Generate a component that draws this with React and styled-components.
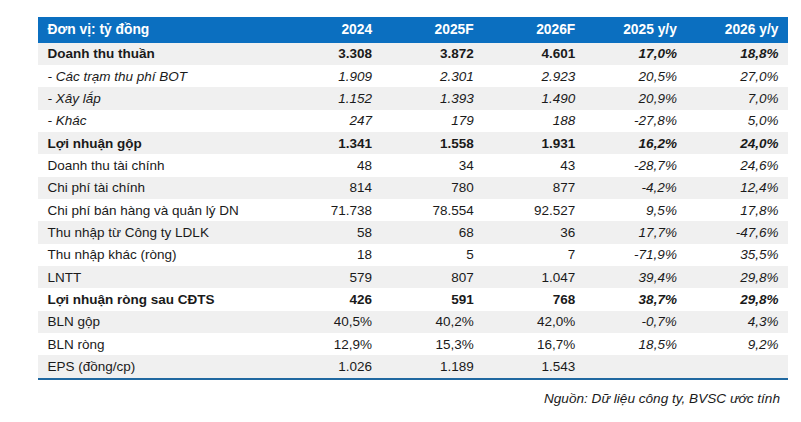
import React from "react";
import styled, { createGlobalStyle } from "styled-components";

const rows = [
  { label: "Doanh thu thuần", v: ["3.308", "3.872", "4.601", "17,0%", "18,8%"], bold: true },
  { label: "- Các trạm thu phí BOT", v: ["1.909", "2.301", "2.923", "20,5%", "27,0%"], sub: true },
  { label: "- Xây lắp", v: ["1.152", "1.393", "1.490", "20,9%", "7,0%"], sub: true },
  { label: "- Khác", v: ["247", "179", "188", "-27,8%", "5,0%"], sub: true },
  { label: "Lợi nhuận gộp", v: ["1.341", "1.558", "1.931", "16,2%", "24,0%"], bold: true },
  { label: "Doanh thu tài chính", v: ["48", "34", "43", "-28,7%", "24,6%"] },
  { label: "Chi phí tài chính", v: ["814", "780", "877", "-4,2%", "12,4%"] },
  { label: "Chi phí bán hàng và quản lý DN", v: ["71.738", "78.554", "92.527", "9,5%", "17,8%"] },
  { label: "Thu nhập từ Công ty LDLK", v: ["58", "68", "36", "17,7%", "-47,6%"] },
  { label: "Thu nhập khác (ròng)", v: ["18", "5", "7", "-71,9%", "35,5%"] },
  { label: "LNTT", v: ["579", "807", "1.047", "39,4%", "29,8%"] },
  { label: "Lợi nhuận ròng sau CĐTS", v: ["426", "591", "768", "38,7%", "29,8%"], bold: true },
  { label: "BLN gộp", v: ["40,5%", "40,2%", "42,0%", "-0,7%", "4,3%"] },
  { label: "BLN ròng", v: ["12,9%", "15,3%", "16,7%", "18,5%", "9,2%"] },
  { label: "EPS (đồng/cp)", v: ["1.026", "1.189", "1.543", "", ""] },
];

const headers = ["2024", "2025F", "2026F", "2025 y/y", "2026 y/y"];

function App() {
  return (
    <>
      <GlobalStyle />
      <Page>
        <Table>
          <HeadRow>
            <HeadCell>Đơn vị: tỷ đồng</HeadCell>
            {headers.map((h) => (
              <HeadCell key={h} $num>
                {h}
              </HeadCell>
            ))}
          </HeadRow>
          {rows.map((r, i) => (
            <Row key={r.label} $shade={i % 2 === 0} $last={i === rows.length - 1}>
              <Cell $bold={r.bold} $italic={r.sub}>
                {r.label}
              </Cell>
              {r.v.map((val, j) => (
                <Cell key={j} $num $bold={r.bold} $italic={r.sub || j >= 3}>
                  {val}
                </Cell>
              ))}
            </Row>
          ))}
        </Table>
        <Source>Nguồn: Dữ liệu công ty, BVSC ước tính</Source>
      </Page>
    </>
  );
}

export default App;

const GlobalStyle = createGlobalStyle`
  body {
    margin: 0;
    background: #fff;
    font-family: "Liberation Sans", Arial, sans-serif;
    color: #1a1a1a;
  }
`;

const Page = styled.div`
  width: 801px;
  height: 422px;
  padding: 17px 14px 0 38px;
  box-sizing: border-box;
`;

const Table = styled.div`
  width: 750px;
`;

const HeadRow = styled.div`
  display: grid;
  grid-template-columns: 242px repeat(5, 1fr);
  height: 25.5px;
  align-items: center;
  background: #0b6fc0;
  color: #fff;
  font-weight: bold;
  font-size: 13.8px;
`;

const HeadCell = styled.div`
  padding: 0 9.5px;
  text-align: ${(p) => (p.$num ? "right" : "left")};
  white-space: nowrap;
`;

const Row = styled.div`
  display: grid;
  grid-template-columns: 242px repeat(5, 1fr);
  height: 22.35px;
  align-items: center;
  background: ${(p) => (p.$shade ? "#f0f0f0" : "#fff")};
  border-bottom: ${(p) => (p.$last ? "2.5px solid #2068a0" : "none")};
  font-size: 13.5px;
`;

const Cell = styled.div`
  padding: 0 9.5px;
  text-align: ${(p) => (p.$num ? "right" : "left")};
  font-weight: ${(p) => (p.$bold ? "bold" : "normal")};
  font-style: ${(p) => (p.$italic ? "italic" : "normal")};
  white-space: nowrap;
`;

const Source = styled.div`
  width: 742px;
  margin-top: 11px;
  text-align: right;
  font-style: italic;
  font-size: 13.6px;
  color: #1a1a1a;
`;
